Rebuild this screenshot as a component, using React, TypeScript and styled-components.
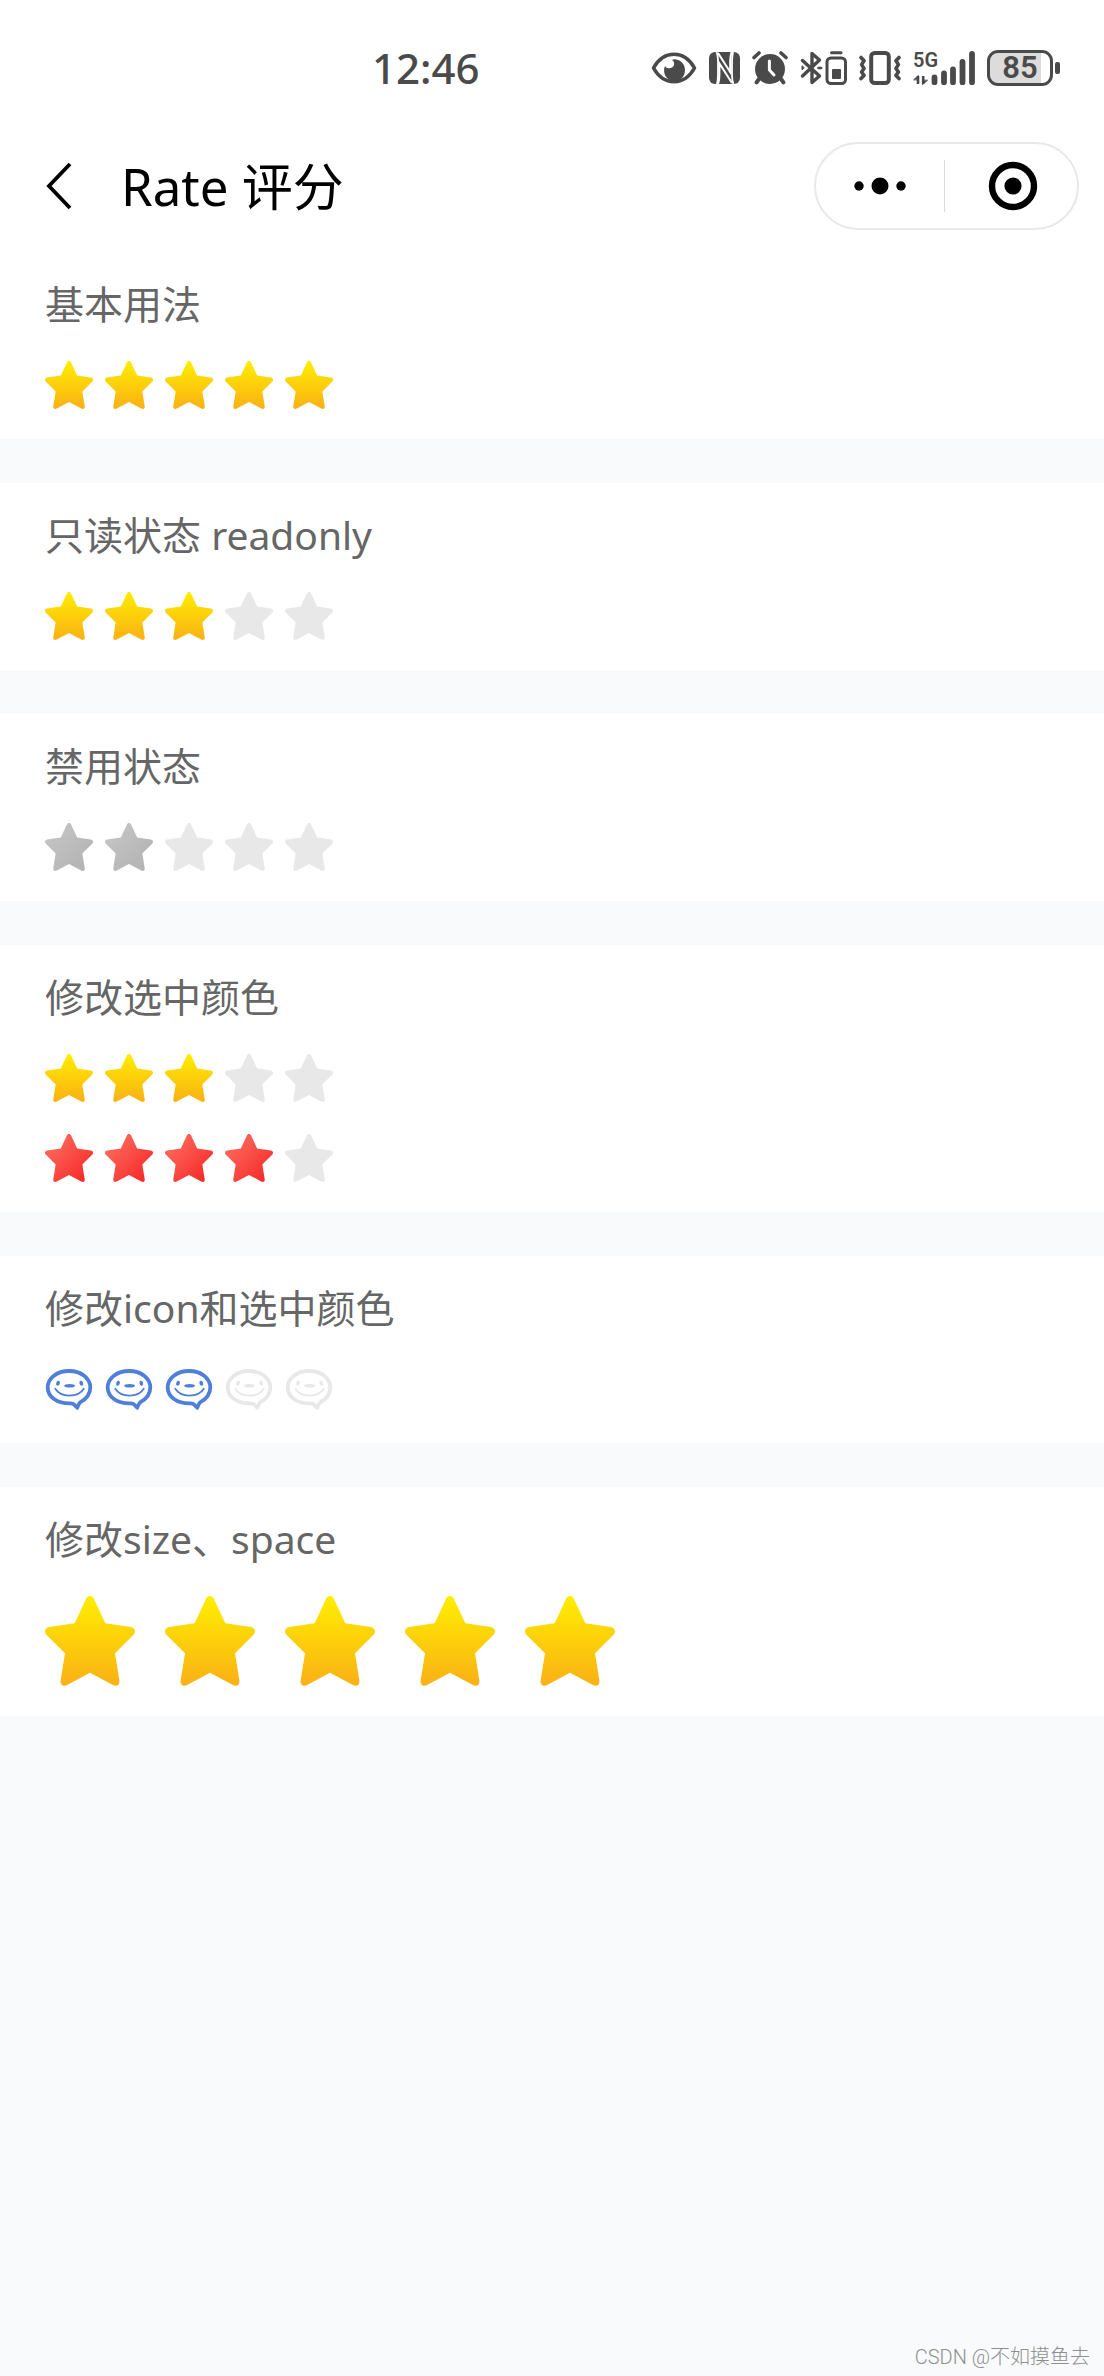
import React, { useId, useState } from "react";
import styled, { createGlobalStyle } from "styled-components";

const INK = "#4a4a4a";

const GlobalStyle = createGlobalStyle`
  *, *::before, *::after { box-sizing: border-box; }
  body {
    margin: 0;
    background: #f8fafc;
    font-family: "Noto Sans", "Noto Sans CJK SC", sans-serif;
  }
`;

const Page = styled.div`
  display: flex;
  flex-direction: column;
  min-height: 100vh;
`;

const StatusBar = styled.div`
  display: flex;
  align-items: center;
  justify-content: space-between;
  height: 120px;
  padding: 16px 44px 0 33.7%;
  background: #fff;
  color: ${INK};
`;

const Clock = styled.time`
  font-size: 42px;
  line-height: 48px;
  font-weight: 500;
`;

const StatusIcons = styled.div`
  display: flex;
  align-items: center;
  gap: 12px;

  svg { display: block; }
`;

const Battery = styled.div`
  display: flex;
  align-items: center;
  gap: 2px;
`;

const BatteryBody = styled.span`
  display: flex;
  align-items: center;
  justify-content: center;
  width: 66px;
  height: 36px;
  border: 3px solid ${INK};
  border-radius: 11px;
  background: linear-gradient(90deg, #dcdcdc 85%, #fff 85%);
  font: 600 31px/30px Roboto, sans-serif;
`;

const BatteryTip = styled.span`
  width: 5px;
  height: 12px;
  border-radius: 2px;
  background: ${INK};
`;

const NavBar = styled.header`
  display: flex;
  align-items: center;
  height: 132px;
  padding: 0 25px 0 45px;
  background: #fff;
`;

const BackButton = styled.button`
  display: flex;
  width: 30px;
  margin-right: 46px;
  padding: 0;
  border: 0;
  background: none;
`;

const Title = styled.h1`
  flex: 1;
  margin: 0;
  font-size: 51px;
  line-height: 60px;
  font-weight: 400;
  color: #000;
`;

const Capsule = styled.div`
  display: flex;
  align-items: center;
  width: 265px;
  height: 88px;
  border: 2px solid #e8e8e8;
  border-radius: 44px;
`;

const CapsuleButton = styled.button`
  display: flex;
  flex: 1 1 0;
  align-items: center;
  justify-content: center;
  height: 52px;
  padding: 0;
  border: 0;
  background: none;

  & + & {
    padding-left: 4px;
    border-left: 1px solid #dcdcdc;
  }
`;

const Sections = styled.main`
  display: flex;
  flex-direction: column;
  gap: 44px;
`;

const Section = styled.section`
  padding: 30px 45px;
  background: #fff;
`;

const SectionTitle = styled.h2`
  margin: 0 0 35px;
  font-size: 39px;
  line-height: 44px;
  font-weight: 400;
  color: #666;
`;

const Rates = styled.div`
  display: flex;
  flex-direction: column;
  gap: 32px;
`;

const RateGroup = styled.div<{ $space: number }>`
  display: flex;
  gap: ${(p) => p.$space}px;
`;

const RateItem = styled.label<{ $size: number }>`
  position: relative;
  width: ${(p) => p.$size}px;
  height: ${(p) => p.$size}px;

  svg { display: block; width: 100%; height: 100%; }
`;

const RateInput = styled.input`
  position: absolute;
  inset: 0;
  width: 100%;
  height: 100%;
  margin: 0;
  opacity: 0;
`;

const Watermark = styled.footer`
  margin-top: auto;
  padding: 0 14px 7px;
  font-family: "Liberation Sans", "Noto Sans CJK SC", sans-serif;
  font-size: 20px;
  line-height: 24px;
  font-weight: 300;
  text-align: right;
  color: #8f8f8f;
`;

const WatermarkSource = styled.span`
  font-family: Roboto, sans-serif;
`;

type Paint = { from: string; to: string; diagonal?: boolean };

const GOLD: Paint = { from: "#ffee00", to: "#fab015" };
const RED: Paint = { from: "#ff7566", to: "#f52222", diagonal: true };
const GREY: Paint = { from: "#c7c7c7", to: "#b1b1b1", diagonal: true };
const BLUE: Paint = { from: "#4f7fd9", to: "#4f7fd9" };
const VOID: Paint = { from: "#e8e8e8", to: "#e8e8e8" };

function Star({ paint }: { paint: Paint }) {
  const id = useId();
  return (
    <svg viewBox="0 0 90 90" aria-hidden="true">
      <defs>
        <linearGradient id={id} x1="0" y1="0" x2={paint.diagonal ? "1" : "0"} y2="1">
          <stop offset="0" stopColor={paint.from} />
          <stop offset="1" stopColor={paint.to} />
        </linearGradient>
      </defs>
      <path
        fill={`url(#${id})`}
        d="M45 0C47 0 48.2 1.2 49 3L60.3 27.3L86 31C90 31.8 91.2 35.5 88.8 38.5L70 57.3L74.4 84.5C75 89 71.8 91 68 89L45 76.7L22 89C18.2 91 15 89 15.6 84.5L20 57.3L1.2 38.5C-1.2 35.5 0 31.8 4 31L29.7 27.3L41 3C41.8 1.2 43 0 45 0Z"
      />
    </svg>
  );
}

function Face({ paint }: { paint: Paint }) {
  const c = paint.from;
  return (
    <svg viewBox="0 0 48 48" fill="none" stroke={c} strokeLinecap="round" aria-hidden="true">
      <path
        strokeWidth="3.8"
        strokeLinejoin="round"
        d="M24.5 38.4C27 38.2 28.4 38.6 29.4 39.8L32.2 42.8C33.2 40.6 33.6 38.8 35.4 37.2C41.4 33.8 45.3 28.8 45.3 22.5C45.3 13 36 6 24 6S2.7 13 2.7 22.5S12 38.4 24.5 38.4Z"
      />
      <path strokeWidth="1.8" d="M10.3 23.8C16 33 33 33 38.8 23.8" />
      <g fill={c} stroke="none">
        <ellipse cx="13" cy="18.2" rx="1.8" ry="2.6" transform="rotate(18 13 18.2)" />
        <ellipse cx="36.3" cy="18.2" rx="1.8" ry="2.6" transform="rotate(-18 36.3 18.2)" />
        <ellipse cx="24.6" cy="20.7" rx="5.4" ry="1.8" />
      </g>
    </svg>
  );
}

type RateProps = {
  label: string;
  initial: number;
  paint?: Paint;
  shape?: "star" | "face";
  size?: number;
  space?: number;
  locked?: boolean;
};

function Rate({ label, initial, paint = GOLD, shape = "star", size = 48, space = 12, locked }: RateProps) {
  const [value, setValue] = useState(initial);
  const name = useId();
  const Shape = shape === "star" ? Star : Face;
  return (
    <RateGroup role="radiogroup" aria-label={label} $space={space}>
      {[1, 2, 3, 4, 5].map((n) => (
        <RateItem key={n} $size={size}>
          <RateInput
            type="radio"
            name={name}
            aria-label={String(n)}
            checked={n === value}
            disabled={locked}
            onChange={() => setValue(n)}
          />
          <Shape paint={n <= value ? paint : VOID} />
        </RateItem>
      ))}
    </RateGroup>
  );
}

function EyeIcon() {
  return (
    <svg width="46" height="32" viewBox="0 0 45 32" fill="none">
      <path d="M2 16C7 7 14 2.3 22.5 2.3S38 7 43 16C38 25 31 29.7 22.5 29.7S7 25 2 16Z" stroke={INK} strokeWidth="3.6" strokeLinejoin="round" />
      <path d="M20.5 8C24 5.8 33.5 9 33.5 18C33.5 24.5 29 29 23 29C17 29 12.6 24.5 12.6 18.5C12.6 17 13 15 13.6 14C15 17.5 22 17 22.6 12.5C22.8 10.5 22 8.8 20.5 8Z" fill={INK} />
    </svg>
  );
}

function NfcIcon() {
  return (
    <svg width="31" height="32" viewBox="0 0 31 32" fill="none">
      <rect width="31" height="32" rx="6" fill={INK} />
      <path d="M7.5 0C9 3 9 6 9 10V22C9 26 8.8 29 8 32" stroke="#fff" strokeWidth="1.8" />
      <path d="M9 1L21.2 20V9C21.2 5 21.6 3 22.6 0" stroke="#fff" strokeWidth="2" />
      <path d="M9 32C10.6 28 10.4 25 10.4 21V11.5L23 31" stroke="#fff" strokeWidth="2" />
      <path d="M24 0C23.2 4 23 7 23 11V23C23 27 23.4 29 24.4 32" stroke="#fff" strokeWidth="1.8" />
    </svg>
  );
}

function AlarmIcon() {
  return (
    <svg width="36" height="34" viewBox="0 0 36 34" fill="none" stroke={INK} strokeLinecap="round">
      <circle cx="18" cy="18" r="15" fill={INK} stroke="none" />
      <path d="M2 6.5L7 2M34 6.5L29 2" strokeWidth="3.6" />
      <path d="M7 28L4.6 31.4M29 28L31.4 31.4" strokeWidth="4" />
      <path d="M17.4 10V19L22 24" stroke="#fff" strokeWidth="3" />
    </svg>
  );
}

function BluetoothIcon() {
  return (
    <svg width="47" height="34" viewBox="0 0 47 34" fill="none" stroke={INK} strokeLinejoin="round" strokeLinecap="round">
      <path d="M2.5 9.5L19.5 25L12 31.5V2.5L19.5 9L2.5 25" strokeWidth="3.4" />
      <path d="M2 15.2V18.8L4 17Z" fill={INK} strokeWidth="1" />
      <path d="M18.5 17H21" strokeWidth="2.6" />
      <rect x="27" y="7" width="18.5" height="25.5" rx="4" strokeWidth="3" />
      <path d="M31.5 1.7H41" strokeWidth="3" />
      <rect x="32" y="18" width="9" height="10" rx="1" fill={INK} stroke="none" />
    </svg>
  );
}

function VibrateIcon() {
  return (
    <svg width="42" height="34" viewBox="0 0 42 34" fill="none" stroke={INK} strokeLinejoin="round" strokeLinecap="round">
      <rect x="12.2" y="2" width="17.6" height="30" rx="3.5" strokeWidth="4" />
      <path d="M2 6.5L5 9.8L2.6 13.6L5 17.4L2.6 21L5 24.4L2 27.6" strokeWidth="3.6" />
      <path d="M40 6.5L37 9.8L39.4 13.6L37 17.4L39.4 21L37 24.4L40 27.6" strokeWidth="3.6" />
    </svg>
  );
}

function SignalIcon() {
  return (
    <svg width="62" height="44" viewBox="0 -5 62 44" fill="none" stroke={INK} strokeLinecap="round">
      <text x="0" y="16" fill={INK} stroke="none" fontFamily="Roboto, sans-serif" fontSize="20" fontWeight="600">
        5G
      </text>
      <path d="M21.5 26.5V31.2M31 22.5V31.2M40 18.5V31.2M49.5 11V31.2M59 3V31.2" strokeWidth="5.8" />
      <path d="M5 25V33M10.2 25V33" strokeWidth="2.6" strokeLinecap="butt" />
      <path d="M0.8 28.6L5.4 24.4V28.6ZM9.6 29.4V33.6L14.4 29.4Z" fill={INK} strokeWidth="0.8" strokeLinejoin="round" />
    </svg>
  );
}

export default function App() {
  return (
    <>
      <GlobalStyle />
      <Page>
        <StatusBar>
          <Clock>12:46</Clock>
          <StatusIcons>
            <EyeIcon />
            <NfcIcon />
            <AlarmIcon />
            <BluetoothIcon />
            <VibrateIcon />
            <SignalIcon />
            <Battery>
              <BatteryBody>85</BatteryBody>
              <BatteryTip />
            </Battery>
          </StatusIcons>
        </StatusBar>

        <NavBar>
          <BackButton type="button" aria-label="返回">
            <svg width="30" height="48" viewBox="0 0 30 48" fill="none" stroke="#000" strokeWidth="3.8">
              <path d="M25 2L4 24L25 46" />
            </svg>
          </BackButton>
          <Title>Rate 评分</Title>
          <Capsule>
            <CapsuleButton type="button" aria-label="更多">
              <svg width="54" height="20" viewBox="0 0 54 20">
                <circle cx="6" cy="10" r="4.7" />
                <circle cx="27" cy="10" r="8.5" />
                <circle cx="48" cy="10" r="4.7" />
              </svg>
            </CapsuleButton>
            <CapsuleButton type="button" aria-label="关闭">
              <svg width="50" height="50" viewBox="0 0 50 50">
                <circle cx="25" cy="25" r="21" fill="none" stroke="#000" strokeWidth="6.4" />
                <circle cx="25" cy="25" r="8.6" />
              </svg>
            </CapsuleButton>
          </Capsule>
        </NavBar>

        <Sections>
          <Section>
            <SectionTitle>基本用法</SectionTitle>
            <Rate label="基本用法" initial={5} />
          </Section>
          <Section>
            <SectionTitle>只读状态 readonly</SectionTitle>
            <Rate label="只读状态" initial={3} locked />
          </Section>
          <Section>
            <SectionTitle>禁用状态</SectionTitle>
            <Rate label="禁用状态" initial={2} paint={GREY} locked />
          </Section>
          <Section>
            <SectionTitle>修改选中颜色</SectionTitle>
            <Rates>
              <Rate label="金色" initial={3} />
              <Rate label="红色" initial={4} paint={RED} />
            </Rates>
          </Section>
          <Section>
            <SectionTitle>修改icon和选中颜色</SectionTitle>
            <Rate label="修改icon" initial={3} shape="face" paint={BLUE} />
          </Section>
          <Section>
            <SectionTitle>修改size、space</SectionTitle>
            <Rate label="修改size" initial={5} size={90} space={30} />
          </Section>
        </Sections>

        <Watermark>
          <WatermarkSource>CSDN @</WatermarkSource>不如摸鱼去
        </Watermark>
      </Page>
    </>
  );
}
